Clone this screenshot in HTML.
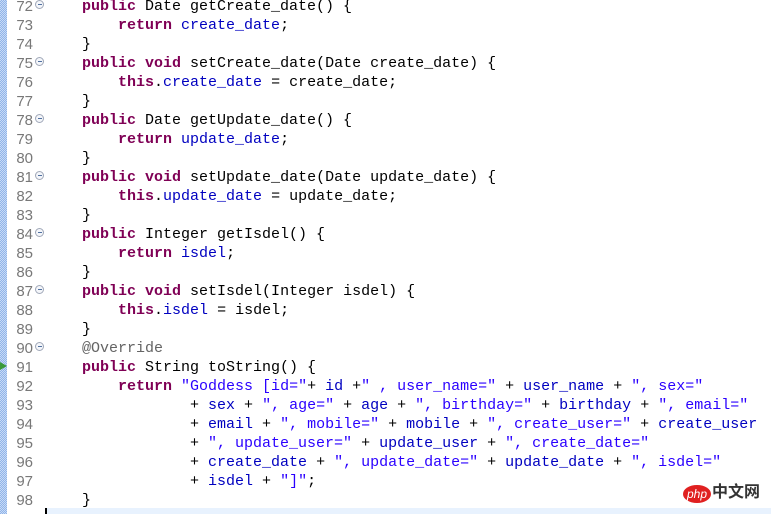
<!DOCTYPE html>
<html><head><meta charset="utf-8"><style>
body{margin:0;width:771px;height:514px;overflow:hidden;background:#fff;position:relative;font-family:"Liberation Mono",monospace;}
.strip{position:absolute;left:0;top:0;width:7px;height:514px;background-color:#c8daf5;background-image:linear-gradient(45deg,#8fb4ea 25%,transparent 25%,transparent 75%,#8fb4ea 75%),linear-gradient(45deg,#8fb4ea 25%,transparent 25%,transparent 75%,#8fb4ea 75%);background-size:2px 2px;background-position:0 0,1px 1px;}
.cur{position:absolute;left:46px;top:508px;width:725px;height:6px;background:#e8f2fe;}
.caret{position:absolute;left:45px;top:508px;width:2px;height:6px;background:#000;}
.ln{position:absolute;left:0;width:33px;text-align:right;font-family:"Liberation Sans",sans-serif;font-size:15px;color:#787878;line-height:19px;}
.fold{position:absolute;left:35px;width:7px;height:7px;border:1px solid #a0a8b8;border-radius:50%;background:#f4f6fa;}
.fold:after{content:"";position:absolute;left:2px;top:3px;width:4px;height:1px;background:#5070a0;}
.code{position:absolute;left:82px;top:-3px;font-size:15px;line-height:19px;white-space:pre;color:#000;}
.k{color:#7f0055;font-weight:bold}.f{color:#0000c0}.s{color:#2a00ff}.a{color:#646464}
</style></head><body>
<div class="strip"></div>
<div class="cur"></div><div class="caret"></div>
<div style="position:absolute;left:0;top:362px;width:0;height:0;border-left:7px solid #3a9a3a;border-top:4px solid transparent;border-bottom:4px solid transparent"></div>
<div id="nums"></div>
<div class="code"><span class="k">public</span> Date getCreate_date() {
    <span class="k">return</span> <span class="f">create_date</span>;
}
<span class="k">public</span> <span class="k">void</span> setCreate_date(Date create_date) {
    <span class="k">this</span>.<span class="f">create_date</span> = create_date;
}
<span class="k">public</span> Date getUpdate_date() {
    <span class="k">return</span> <span class="f">update_date</span>;
}
<span class="k">public</span> <span class="k">void</span> setUpdate_date(Date update_date) {
    <span class="k">this</span>.<span class="f">update_date</span> = update_date;
}
<span class="k">public</span> Integer getIsdel() {
    <span class="k">return</span> <span class="f">isdel</span>;
}
<span class="k">public</span> <span class="k">void</span> setIsdel(Integer isdel) {
    <span class="k">this</span>.<span class="f">isdel</span> = isdel;
}
<span class="a">@Override</span>
<span class="k">public</span> String toString() {
    <span class="k">return</span> <span class="s">"Goddess [id="</span>+ <span class="f">id</span> +<span class="s">" , user_name="</span> + <span class="f">user_name</span> + <span class="s">", sex="</span>
            + <span class="f">sex</span> + <span class="s">", age="</span> + <span class="f">age</span> + <span class="s">", birthday="</span> + <span class="f">birthday</span> + <span class="s">", email="</span>
            + <span class="f">email</span> + <span class="s">", mobile="</span> + <span class="f">mobile</span> + <span class="s">", create_user="</span> + <span class="f">create_user</span>
            + <span class="s">", update_user="</span> + <span class="f">update_user</span> + <span class="s">", create_date="</span>
            + <span class="f">create_date</span> + <span class="s">", update_date="</span> + <span class="f">update_date</span> + <span class="s">", isdel="</span>
            + <span class="f">isdel</span> + <span class="s">"]"</span>;
}</div>
<div style="position:absolute;left:683px;top:485px;width:28px;height:18px;border-radius:50%;background:#e02020;color:#fff;font-family:'Liberation Sans',sans-serif;font-style:italic;font-size:12px;line-height:18px;text-align:center">php</div>
<div style="position:absolute;left:712px;top:483px;font-family:'Liberation Sans','Noto Sans CJK SC',sans-serif;font-size:16px;color:#333;font-weight:bold;line-height:20px">中文网</div>
<script>
var h='';var folds=[72,75,78,81,84,87,90];
for(var i=72;i<=98;i++){var t=-3+(i-72)*19;h+='<div class="ln" style="top:'+t+'px">'+i+'</div>';if(folds.indexOf(i)>=0)h+='<div class="fold" style="top:'+(t+3)+'px"></div>';}
document.getElementById('nums').innerHTML=h;
</script>
</body></html>
